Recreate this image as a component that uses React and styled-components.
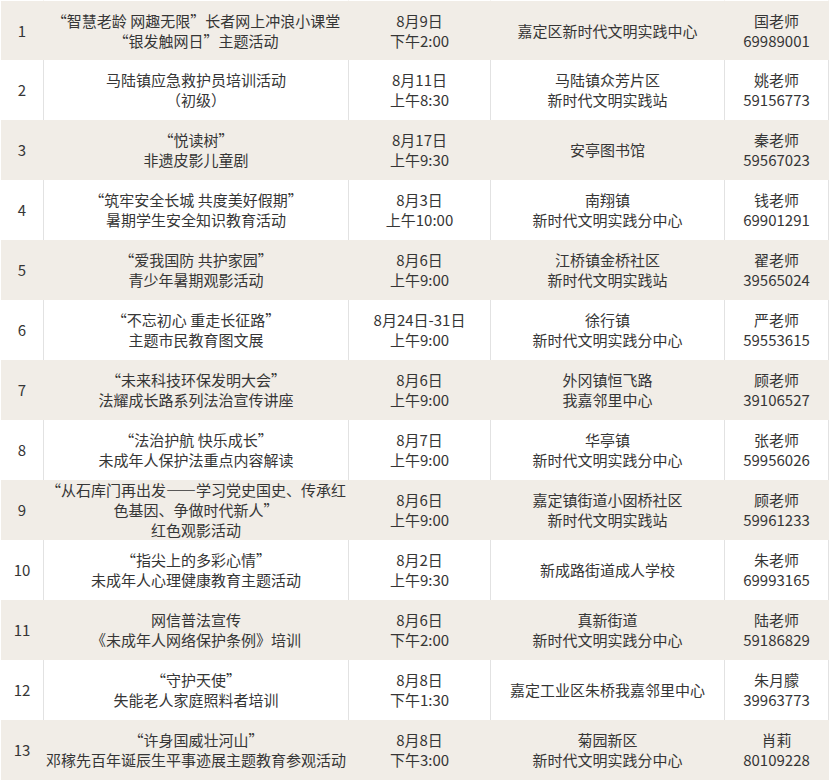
import React from "react";
import styled, { createGlobalStyle } from "styled-components";

const GlobalStyle = createGlobalStyle`
    html, body {
        margin: 0;
        padding: 0;
        background: #fff;
    }
`;

const Page = styled.div`
    width: 830px;
    padding-left: 1px;
    font-family: "Noto Sans CJK SC", "Noto Sans", sans-serif;
    font-size: 15px;
    line-height: 20px;
    color: #363636;
`;

const Table = styled.table`
    width: 828px;
    table-layout: fixed;
    border-collapse: separate;
    border-spacing: 0;
`;

const Col = styled.col`
    width: ${p => p.$w}px;
`;

const Row = styled.tr`
    height: 60px;
    background: ${p => (p.$shaded ? "#f1ede7" : "#fff")};
    td {
        border-right: 1px solid ${p => (p.$shaded ? "transparent" : "#e2e2e2")};
    }
    &:first-child td {
        border-top: 1px solid #fff;
    }
`;

const Cell = styled.td`
    box-sizing: border-box;
    padding: 0;
    text-align: center;
    vertical-align: middle;
    white-space: nowrap;
`;

// full-width quote marks, as the CJK page font draws them
const Quote = styled.span`
    display: inline-block;
    width: 1em;
    text-align: ${p => (p.$open ? "right" : "left")};
`;

const widths = [43, 305, 142, 234, 104];

const rows = [
    [["“智慧老龄 网趣无限”长者网上冲浪小课堂", "“银发触网日”主题活动"], ["8月9日", "下午2:00"], ["嘉定区新时代文明实践中心"], ["国老师", "69989001"]],
    [["马陆镇应急救护员培训活动", "（初级）"], ["8月11日", "上午8:30"], ["马陆镇众芳片区", "新时代文明实践站"], ["姚老师", "59156773"]],
    [["“悦读树”", "非遗皮影儿童剧"], ["8月17日", "上午9:30"], ["安亭图书馆"], ["秦老师", "59567023"]],
    [["“筑牢安全长城 共度美好假期”", "暑期学生安全知识教育活动"], ["8月3日", "上午10:00"], ["南翔镇", "新时代文明实践分中心"], ["钱老师", "69901291"]],
    [["“爱我国防 共护家园”", "青少年暑期观影活动"], ["8月6日", "上午9:00"], ["江桥镇金桥社区", "新时代文明实践站"], ["翟老师", "39565024"]],
    [["“不忘初心 重走长征路”", "主题市民教育图文展"], ["8月24日-31日", "上午9:00"], ["徐行镇", "新时代文明实践分中心"], ["严老师", "59553615"]],
    [["“未来科技环保发明大会”", "法耀成长路系列法治宣传讲座"], ["8月6日", "上午9:00"], ["外冈镇恒飞路", "我嘉邻里中心"], ["顾老师", "39106527"]],
    [["“法治护航 快乐成长”", "未成年人保护法重点内容解读"], ["8月7日", "上午9:00"], ["华亭镇", "新时代文明实践分中心"], ["张老师", "59956026"]],
    [["“从石库门再出发——学习党史国史、传承红", "色基因、争做时代新人”", "红色观影活动"], ["8月6日", "上午9:00"], ["嘉定镇街道小囡桥社区", "新时代文明实践站"], ["顾老师", "59961233"]],
    [["“指尖上的多彩心情”", "未成年人心理健康教育主题活动"], ["8月2日", "上午9:30"], ["新成路街道成人学校"], ["朱老师", "69993165"]],
    [["网信普法宣传", "《未成年人网络保护条例》培训"], ["8月6日", "下午2:00"], ["真新街道", "新时代文明实践分中心"], ["陆老师", "59186829"]],
    [["“守护天使”", "失能老人家庭照料者培训"], ["8月8日", "下午1:30"], ["嘉定工业区朱桥我嘉邻里中心"], ["朱月朦", "39963773"]],
    [["“许身国威壮河山”", "邓稼先百年诞辰生平事迹展主题教育参观活动"], ["8月8日", "下午3:00"], ["菊园新区", "新时代文明实践分中心"], ["肖莉", "80109228"]],
];

const Text = ({ text }) =>
    text.split(/([“”])/).map((part, i) =>
        part === "“" || part === "”" ? (
            <Quote key={i} $open={part === "“"}>
                {part}
            </Quote>
        ) : (
            part
        )
    );

const Lines = ({ lines }) =>
    lines.map((l, i) => (
        <React.Fragment key={i}>
            {i > 0 && <br />}
            <Text text={l} />
        </React.Fragment>
    ));

export default function App() {
    return (
        <Page lang="zh-CN">
            <GlobalStyle />
            <Table>
                <colgroup>
                    {widths.map((w, i) => (
                        <Col key={i} $w={w} />
                    ))}
                </colgroup>
                <tbody>
                    {rows.map((r, i) => (
                        <Row key={i} $shaded={i % 2 === 0}>
                            <Cell>{i + 1}</Cell>
                            {r.map((c, j) => (
                                <Cell key={j}>
                                    <Lines lines={c} />
                                </Cell>
                            ))}
                        </Row>
                    ))}
                </tbody>
            </Table>
        </Page>
    );
}
